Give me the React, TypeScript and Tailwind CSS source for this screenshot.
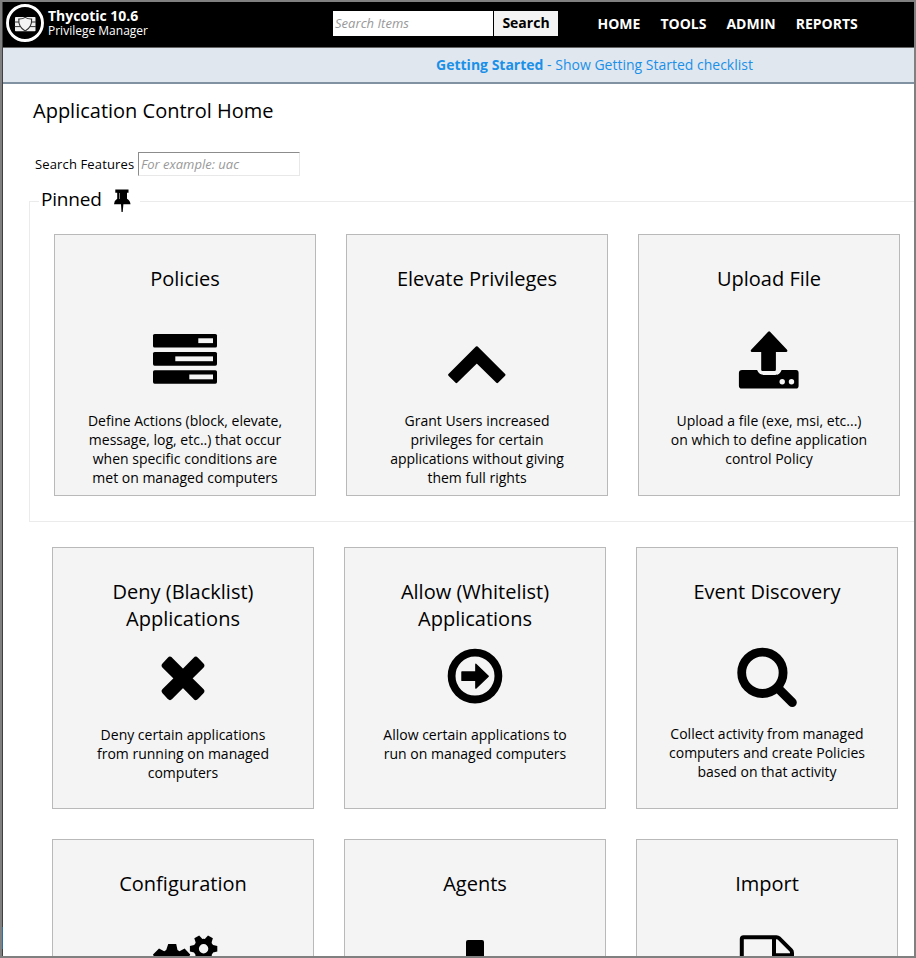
import type { ReactNode } from 'react';

function Icon({ children }: { children: ReactNode }) {
  return (
    <svg className="block h-[92px] w-[100px] shrink-0" viewBox="0 0 100 92" fill="black">
      {children}
    </svg>
  );
}

const policiesIcon = (
  <Icon>
    <rect x="18" y="15" width="64" height="13.5" rx="1.6" />
    <rect x="18" y="33" width="64" height="13.7" rx="1.6" />
    <rect x="18" y="51.2" width="64" height="13.5" rx="1.6" />
    <g fill="#f4f4f4">
      <rect x="63.3" y="19.3" width="14.7" height="4.8" />
      <rect x="40.3" y="37.4" width="37.7" height="4.8" />
      <rect x="54.3" y="55.5" width="23.7" height="4.8" />
    </g>
  </Icon>
);

const elevateIcon = (
  <Icon>
    <path d="M49.8 28.4 22.3 55.9 29.4 63 49.8 42.8 70.2 63 77.3 55.9Z" stroke="black" strokeWidth="2.4" strokeLinejoin="round" />
  </Icon>
);

const uploadIcon = (
  <Icon>
    <g transform="translate(.6 .6)">
      <path d="M49.5 13 32.5 31.1H42.9V50.1H55V31.1H66.5Z" stroke="black" strokeWidth="2.6" strokeLinejoin="round" />
      <path d="M22.5 50.5H37.5C39 54 41 55.4 44.5 55.4H55.5C59 55.4 60.5 54 62 50.5H76.5Q79 50.5 79 53.5V66.2Q79 69 76.5 69H22Q19.3 69 19.3 66.2V53.5Q19.3 50.5 22.5 50.5Z" />
      <circle cx="62.6" cy="62.2" r="2.7" fill="#f4f4f4" />
      <circle cx="71.9" cy="62.2" r="2.7" fill="#f4f4f4" />
    </g>
  </Icon>
);

const denyIcon = (
  <Icon>
    <path
      d="M37 27.8 50 40.8 62.8 27.8 68.3 33.6 55.4 46.4 68.3 59.2 62.8 65 50 52 37 65 31.7 59.2 44.6 46.4 31.7 33.6Z"
      stroke="black"
      strokeWidth="6"
      strokeLinejoin="round"
    />
  </Icon>
);

const allowIcon = (
  <Icon>
    <circle cx="50" cy="44.1" r="23.4" fill="none" stroke="black" strokeWidth="7.8" />
    <path d="M36.9 39.9H50.8V32.2L63.3 44.2 50.8 56.2V48.4H36.9Z" stroke="black" strokeWidth="1.2" strokeLinejoin="round" />
  </Icon>
);

const discoveryIcon = (
  <Icon>
    <g fill="none" stroke="black" strokeLinecap="round">
      <circle cx="45.4" cy="40.8" r="20.7" strokeWidth="8.8" />
      <path d="M62 57.2 75.3 70.5" strokeWidth="9" />
    </g>
  </Icon>
);

const configurationIcon = (
  <Icon>
    <path d="M35.2 20H43.2L44.5 26 46.5 27.2 51.6 24.5 57.2 30.5 55 35H22L20 30.5 26 24.5 31.2 27.2 33.2 26Z" />
    <circle cx="70.6" cy="24.8" r="7.4" fill="none" stroke="black" strokeWidth="5.4" />
    {[0, 60, 120, 180, 240, 300].map((angle) => (
      <path key={angle} d="M79 20.8 84.3 22V27.6L79 28.8Z" transform={`rotate(${angle} 70.6 24.8)`} />
    ))}
  </Icon>
);

const agentsIcon = (
  <Icon>
    <path d="M43 16H57Q59 16 59 18V44H68L50 64 32 44H41V18Q41 16 43 16Z" />
  </Icon>
);

const importIcon = (
  <Icon>
    <g fill="none" stroke="black" strokeWidth="4" strokeLinejoin="round">
      <path d="M24.8 70V15Q24.8 13.2 26.6 13.2H59.5Q61 13.2 62 14.2L74 26.2Q75 27.2 75 29V70Z" />
      <path d="M57 13.2V31.2H75" />
    </g>
  </Icon>
);

type Feature = { title: ReactNode; icon: ReactNode; lines: string[]; low?: boolean };

const pinned: Feature[] = [
  {
    title: 'Policies',
    icon: policiesIcon,
    lines: ['Define Actions (block, elevate,', 'message, log, etc..) that occur', 'when specific conditions are', 'met on managed computers'],
  },
  {
    title: 'Elevate Privileges',
    icon: elevateIcon,
    lines: ['Grant Users increased', 'privileges for certain', 'applications without giving', 'them full rights'],
  },
  {
    title: 'Upload File',
    icon: uploadIcon,
    lines: ['Upload a file (exe, msi, etc...)', 'on which to define application', 'control Policy'],
  },
];

const features: Feature[] = [
  {
    title: <>Deny (Blacklist)<br />Applications</>,
    icon: denyIcon,
    lines: ['Deny certain applications', 'from running on managed', 'computers'],
    low: true,
  },
  {
    title: <>Allow (Whitelist)<br />Applications</>,
    icon: allowIcon,
    lines: ['Allow certain applications to', 'run on managed computers'],
    low: true,
  },
  {
    title: 'Event Discovery',
    icon: discoveryIcon,
    lines: ['Collect activity from managed', 'computers and create Policies', 'based on that activity'],
  },
  { title: 'Configuration', icon: configurationIcon, lines: [] },
  { title: 'Agents', icon: agentsIcon, lines: [] },
  { title: 'Import', icon: importIcon, lines: [] },
];

function Card({ title, icon, lines, low }: Feature) {
  return (
    <div className="flex h-[262px] w-[262px] flex-col items-center border border-[#b9b9b9] bg-[#f4f4f4] pt-[30px] text-center">
      <h3 className="h-[54px] shrink-0 text-[20px] leading-[27px]">{title}</h3>
      {icon}
      <p className={`text-[14px] leading-[19px] whitespace-nowrap ${low ? 'pt-[1px]' : ''}`}>
        {lines.map((line) => (
          <span key={line} className="block">{line}</span>
        ))}
      </p>
    </div>
  );
}

function Logo() {
  return (
    <svg className="h-[40px] w-[40px] shrink-0" viewBox="0 0 40 40">
      <circle cx="19" cy="19" r="17.5" fill="none" stroke="white" strokeWidth="2.9" />
      <rect x="9" y="13" width="20.5" height="14.3" rx="0.8" fill="#f0f0f0" />
      <path d="M8.5 18H30M8.5 22.6H30" stroke="#333" strokeWidth="1" />
      <path d="M19.2 13.4Q22 15.2 25.6 15 26.2 23 19.2 27 12.2 23 12.8 15 16.4 15.2 19.2 13.4Z" fill="#f4f4f4" stroke="#333" strokeWidth="1.1" />
    </svg>
  );
}

export default function App() {
  return (
    <div className="h-[958px] w-[916px] overflow-hidden border-2 border-[#808080] bg-white font-['Open_Sans','Noto_Sans',sans-serif] text-black">
      <div className="flex h-full">
        <div className="flex w-px shrink-0 flex-col bg-[#404040] pt-[925px]">
          <div className="h-[22px] bg-[#2a6f9e]" />
        </div>
        <div className="flex h-full min-w-0 grow flex-col overflow-hidden">
          <header className="flex h-[46px] shrink-0 items-start border-b border-[#666] bg-black text-white">
            <div className="flex w-[330px] pt-[2px] pl-[3px]">
              <Logo />
              <div className="pt-[4px] pl-[2px]">
                <div className="text-[14px] leading-[16px] font-bold tracking-[0.46px]">
                  <span className="tracking-normal">Thycotic 10.6</span>
                </div>
                <div className="text-[12px] leading-[13px]">Privilege Manager</div>
              </div>
            </div>
            <div className="mt-[9px] flex h-[25px] gap-px">
              <input className="w-[160px] bg-white px-[2px] text-[13px] tracking-[0.04px] placeholder:text-[#999] placeholder:italic" placeholder="Search Items" />
              <button className="w-[64px] bg-[#f4f4f4] pb-[2px] text-[14px] leading-[19px] font-bold text-black">Search</button>
            </div>
            <nav className="flex gap-[20px] pt-[12px] pl-[39.5px] text-[14px] leading-[19px] font-bold">
              <a>HOME</a>
              <a>TOOLS</a>
              <a>ADMIN</a>
              <a>REPORTS</a>
            </nav>
          </header>
          <div className="flex h-[36px] shrink-0 justify-center border-b-2 border-b-[#8193a2] bg-[#e0e7ef] pt-[7px] pl-[272px] text-[14px] leading-[19px] whitespace-pre text-[#1a90e8]">
            <b>Getting Started</b> - Show Getting Started checklist
          </div>
          <main className="flex flex-col">
            <h1 className="pt-[13px] pl-[30px] text-[20px] leading-[27px]">Application Control Home</h1>
            <div className="mt-[28px] flex h-[24px] items-center gap-[4px] pl-[32px]">
              <label className="w-[99px] text-[13px] leading-[18px] tracking-[0.14px] whitespace-nowrap">Search Features</label>
              <input className="h-[24px] w-[162px] border border-t-[#8c8c8c] border-r-[#e8e8e8] border-b-[#e8e8e8] border-l-[#8c8c8c] pl-[2px] text-[13px] placeholder:text-[#999] placeholder:italic" placeholder="For example: uac" />
            </div>
            <section className="mt-[25px] ml-[26px] h-[321px] w-[900px] border border-[#ebebeb]">
              <div className="-mt-[16px] ml-[9px] flex h-[28px] w-[101px] items-center bg-white pl-[2px]">
                <h2 className="-mt-[3px] w-[60px] text-[19px] leading-[26px] tracking-[-0.2px]">Pinned</h2>
                <svg className="mt-[1px] ml-[13px] h-[24px] w-[17px] shrink-0" viewBox="0 0 17 24">
                  <path d="M1.3.6H14.5V3.8H13V9.8Q16.2 11.4 16.5 15.2H9.4L8.7 23H7.5L7 15.2H0Q.3 11.4 3.2 9.8V3.8H1.3Z" />
                  <path d="M5.5 4V10" stroke="#bbb" strokeWidth="0.7" />
                </svg>
              </div>
              <div className="mt-[20px] flex gap-[30px] pl-[24px]">
                {pinned.map((item, i) => (
                  <Card key={i} {...item} />
                ))}
              </div>
            </section>
            <section className="mt-[25px] grid grid-cols-[262px_262px_262px] gap-[30px] pl-[49px]">
              {features.map((item, i) => (
                <Card key={i} {...item} />
              ))}
            </section>
          </main>
        </div>
      </div>
    </div>
  );
}
